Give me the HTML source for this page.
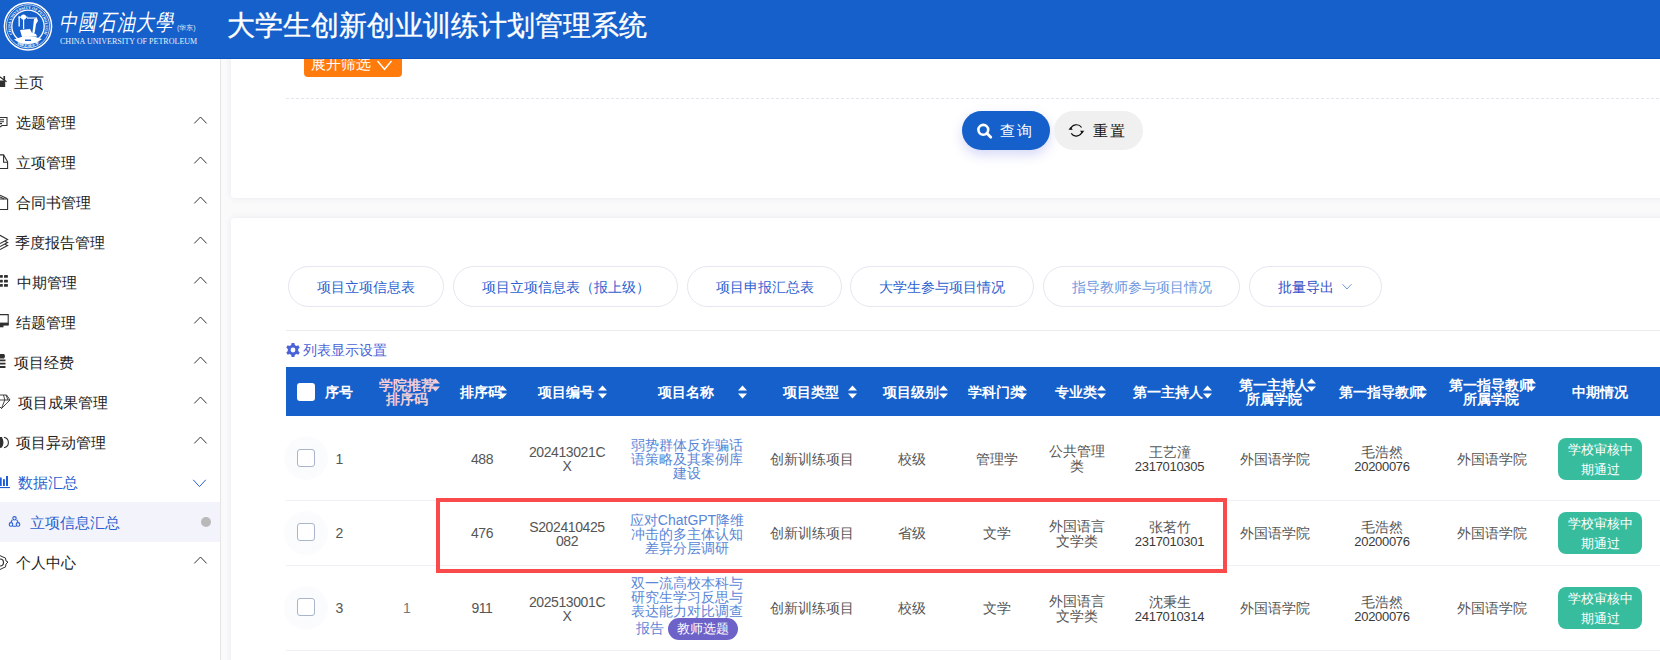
<!DOCTYPE html>
<html><head><meta charset="utf-8">
<style>
*{box-sizing:border-box;margin:0;padding:0}
html,body{width:1660px;height:660px;overflow:hidden}
body{position:relative;background:#fafafb;font-family:"Liberation Sans",sans-serif;font-size:14px;color:#333}
.a{position:absolute;white-space:nowrap}
#hdr{position:absolute;left:0;top:0;width:1660px;height:59px;background:#1560cb;border-bottom:1px solid #0b55c2;z-index:10}
#side{position:absolute;left:0;top:59px;width:221px;height:601px;background:#fff;border-right:1px solid #e6e6e6;z-index:5}
.mi{position:absolute;left:0;width:220px;height:40px;line-height:40px;font-size:15px;color:#333}
.mi .t{position:absolute;top:0}
.st{position:absolute;font-size:15px;line-height:20px;white-space:nowrap}
.chev{position:absolute;left:194px;width:12px;height:12px}
.card{position:absolute;left:231px;width:1500px;background:#fff;border-radius:4px;box-shadow:0 0 7px rgba(30,30,90,.07)}
</style></head><body>
<div id="hdr">
  <svg class="a" style="left:0;top:0" width="60" height="59" viewBox="0 0 60 59">
 <defs><path id="rp" d="M 12.93 35.00 A 17.4 17.4 0 1 1 43.07 35.00"/><path id="rq" d="M 17.08 43.77 A 20.6 20.6 0 0 0 38.92 43.77"/></defs>
 <text font-family="Liberation Serif" font-weight="bold" font-size="3.9" fill="#fff" text-anchor="middle"><textPath href="#rp" startOffset="50%">CHINA UNIVERSITY OF PETROLEUM</textPath></text>
 <text font-size="3.6" fill="#fff" text-anchor="middle" font-weight="bold"><textPath href="#rq" startOffset="50%">中国石油大学</textPath></text>
 <g fill="none" stroke="#fff">
  <circle cx="28" cy="26.3" r="23.6" stroke-width="1.5"/>
  <circle cx="28" cy="26.3" r="21.6" stroke-width="0.7"/>
  <circle cx="28" cy="26.3" r="16.2" stroke-width="1.3"/>
  
 </g>
 <g fill="#fff">
  <rect x="18.5" y="16.5" width="1.3" height="10"/>
  <rect x="18.5" y="16.5" width="9" height="1.2"/>
  <circle cx="23.5" cy="17" r="2.6"/>
  <rect x="23" y="17" width="1.2" height="12"/>
  <rect x="27" y="17.5" width="10" height="1.1"/>
  <path d="M34 19 L37 18 L38 21 L36 24 L35 31 L33.5 36 L32 36 L33 28 Z"/>
  <path d="M20 30 L30 29 L32 33 L36 34 L37 36.5 L22 37 Z"/>
  <path d="M14 39.5 Q28 33.5 42 39 Q36 44 28 44 Q20 44 14 39.5 Z"/>
 </g>
 <rect x="25" y="39.5" width="6" height="1.5" fill="#1560cb"/>
</svg>
<div class="a" style="left:59px;top:4px;font-family:'Liberation Serif',serif;font-style:italic;font-weight:normal;font-size:18px;line-height:30px;color:#fff;letter-spacing:1.3px;transform:scaleY(1.25);transform-origin:0 0">中國石油大學</div>
<div class="a" style="left:177px;top:22px;font-size:7px;line-height:12px;color:#dfe8f8">(华东)</div>
<div class="a" id="cup" style="left:60px;top:37px;font-family:'Liberation Serif',serif;font-size:8.4px;line-height:10px;color:#e6eefa;transform:scaleX(0.958);transform-origin:0 0">CHINA UNIVERSITY OF PETROLEUM</div>
  <div class="a" id="title" style="left:227px;top:6px;font-size:28px;line-height:40px;color:#fff;-webkit-text-stroke:0.35px #fff">大学生创新创业训练计划管理系统</div>
</div>
<div id="side">
<svg class="a" style="left:0;top:0;z-index:6" width="24" height="601" viewBox="0 59 24 601">
<g fill="#303030" stroke="none">
 <path d="M0 80.5 L5.2 80.5 L5.2 87 L0 87 Z"/>
 <rect x="3.4" y="76" width="1.7" height="4.5"/>
</g>
<g fill="none" stroke="#303030" stroke-width="1.1">
 <path d="M-2 75.5 L6.6 81.8"/>
 <path d="M-1 117.5 H7 V125.5 H2 L0 127"/>
 <path d="M0 119.8 H4 M0 121.8 H4 M0 123.6 H2"/>
 <path d="M0 154.9 H3.6 L7.6 161.8 V168.5 H0"/>
 <path d="M3.6 155 V162.3 H7.6"/>
 <path d="M0 199 H7.6 V209.5 H0"/>
 <path d="M0 195.2 L7 198.6 M0 197 L4 199"/>
 <path d="M0 235.3 L7.6 239.5 L0 243.6 M4.8 241.3 L7.6 242.6 L0 246.6 M4.8 244.3 L7.6 245.6 L0 249.6"/>
 <path d="M-1 314.6 H8.2 V325 H-1"/>
 <path d="M0 437.5 A 5 5.5 0 0 1 0 447.5 M4 437.2 A 6 5.5 0 0 1 4 447.8"/>
 <path d="M-2 395 H6.6 L10 400 L1.5 408.5 L-7 400 M-1 400 H10 M3.5 395 L4.8 400 L1.5 408.5 M6 395 L8 400" stroke-width="0.9"/>
 <path d="M0 555.6 L3 557 L5.5 558 L6 561 L8 562 L6 564 L5.5 567 L3 568 L0 569.5" stroke-width="1"/>
 <path d="M0 559 A 3.5 3.5 0 0 1 0 566" stroke-width="1.2"/>
</g>
<g fill="#303030">
 <rect x="0" y="322.6" width="8.4" height="2.6"/>
 <rect x="-1" y="325" width="4.5" height="2.3"/>
 <rect x="0" y="275" width="2.8" height="2.8" rx="0.6"/><rect x="4" y="275" width="3.9" height="2.8" rx="0.6"/>
 <rect x="0" y="279.8" width="2.8" height="2.8" rx="0.6"/><rect x="4" y="279.8" width="3.9" height="2.8" rx="0.6"/>
 <rect x="0" y="284" width="2.8" height="2.8" rx="0.6"/><rect x="4" y="284" width="3.9" height="2.8" rx="0.6"/>
 <path d="M0 354 H4 Q6 356 4 358.5 H0 Z"/>
 <path d="M0 359.6 H5.5 V361.2 H0 Z M0 362.8 H5.5 V364.5 H0 Z M0 366 H5.5 V368 H0 Z"/>
 <path d="M0 437 H2 Q4 442 2 447.5 H0 Z"/>
</g>
<g fill="#1d5ad6">
 <rect x="-0.5" y="477.5" width="2.2" height="8.5"/>
 <rect x="3" y="479.2" width="1.9" height="6.8"/>
 <rect x="6" y="476" width="2" height="10"/>
 <rect x="-1" y="487" width="11" height="1.1"/>
</g>
<g fill="none" stroke="#2a5fd6" stroke-width="1.1">
 <path d="M12.3 519.8 Q11.2 521.2 11 522.4 M16.7 519.8 Q17.8 521.2 18 522.4 M12.6 526.2 H16.4"/>
 <circle cx="14.5" cy="518.3" r="1.7" fill="#f3f4fb"/>
 <circle cx="11" cy="524.4" r="1.8" fill="#f3f4fb"/>
 <circle cx="18" cy="524.4" r="1.8" fill="#f3f4fb"/>
</g>
</svg>
<div class="a" style="left:0;top:443px;width:220px;height:40px;background:#f3f4fb"></div>
<div class="a" style="left:201px;top:458px;width:10px;height:10px;border-radius:50%;background:#b9b9b9"></div>
<div class="st" style="left:14.3px;top:14px;color:#222">主页</div>
<div class="st" style="left:15.7px;top:54px;color:#222">选题管理</div>
<svg class="a" style="left:190px;top:53px" width="20" height="20"><polyline points="4.3,11.4 10.5,5 16.6,11.4" fill="none" stroke="#333" stroke-width="1"/></svg>
<div class="st" style="left:15.9px;top:94px;color:#222">立项管理</div>
<svg class="a" style="left:190px;top:93px" width="20" height="20"><polyline points="4.3,11.4 10.5,5 16.6,11.4" fill="none" stroke="#333" stroke-width="1"/></svg>
<div class="st" style="left:16.0px;top:134px;color:#222">合同书管理</div>
<svg class="a" style="left:190px;top:133px" width="20" height="20"><polyline points="4.3,11.4 10.5,5 16.6,11.4" fill="none" stroke="#333" stroke-width="1"/></svg>
<div class="st" style="left:15.3px;top:174px;color:#222">季度报告管理</div>
<svg class="a" style="left:190px;top:173px" width="20" height="20"><polyline points="4.3,11.4 10.5,5 16.6,11.4" fill="none" stroke="#333" stroke-width="1"/></svg>
<div class="st" style="left:16.6px;top:214px;color:#222">中期管理</div>
<svg class="a" style="left:190px;top:213px" width="20" height="20"><polyline points="4.3,11.4 10.5,5 16.6,11.4" fill="none" stroke="#333" stroke-width="1"/></svg>
<div class="st" style="left:16.3px;top:254px;color:#222">结题管理</div>
<svg class="a" style="left:190px;top:253px" width="20" height="20"><polyline points="4.3,11.4 10.5,5 16.6,11.4" fill="none" stroke="#333" stroke-width="1"/></svg>
<div class="st" style="left:13.8px;top:294px;color:#222">项目经费</div>
<svg class="a" style="left:190px;top:293px" width="20" height="20"><polyline points="4.3,11.4 10.5,5 16.6,11.4" fill="none" stroke="#333" stroke-width="1"/></svg>
<div class="st" style="left:18.2px;top:334px;color:#222">项目成果管理</div>
<svg class="a" style="left:190px;top:333px" width="20" height="20"><polyline points="4.3,11.4 10.5,5 16.6,11.4" fill="none" stroke="#333" stroke-width="1"/></svg>
<div class="st" style="left:15.8px;top:374px;color:#222">项目异动管理</div>
<svg class="a" style="left:190px;top:373px" width="20" height="20"><polyline points="4.3,11.4 10.5,5 16.6,11.4" fill="none" stroke="#333" stroke-width="1"/></svg>
<div class="st" style="left:17.5px;top:414px;color:#2b5fd0">数据汇总</div>
<svg class="a" style="left:190px;top:413px" width="20" height="20"><polyline points="3.2,7.8 9.5,14.6 15.8,7.8" fill="none" stroke="#2b5fd0" stroke-width="1"/></svg>
<div class="st" style="left:29.8px;top:454px;color:#2b5fd0">立项信息汇总</div>
<div class="st" style="left:15.7px;top:494px;color:#222">个人中心</div>
<svg class="a" style="left:190px;top:493px" width="20" height="20"><polyline points="4.3,11.4 10.5,5 16.6,11.4" fill="none" stroke="#333" stroke-width="1"/></svg>
</div>
<!--CONTENT-->
<div class="card" style="top:-20px;height:218px"></div>
<div class="card" style="top:218px;height:600px"></div>
<div class="a" style="left:304px;top:40px;width:98px;height:37px;background:#ff7b0d;border-radius:4px;z-index:2"></div>
<div class="a" style="left:311px;top:56.0px;font-size:15px;line-height:16px;color:#fff;z-index:3">展开筛选</div>
<svg class="a" style="left:374px;top:56px;z-index:3" width="20" height="18"><polyline points="3.5,5 10.5,13.3 17.5,5" fill="none" stroke="#fff" stroke-width="1.4"/></svg>
<div class="a" style="left:286px;top:98px;width:1400px;height:1px;background:repeating-linear-gradient(90deg,#e3e6ed 0 3px,transparent 3px 5px)"></div>
<div class="a" style="left:962px;top:111px;width:88px;height:39px;border-radius:20px;background:#1560cb;box-shadow:0 5px 12px rgba(70,80,220,.22)"></div>
<svg class="a" style="left:975px;top:121px" width="20" height="20"><circle cx="8.3" cy="8.8" r="4.9" fill="none" stroke="#fff" stroke-width="2.6"/><path d="M11.8 12.3 L15.8 16.3" stroke="#fff" stroke-width="2.8" stroke-linecap="round"/></svg>
<div class="a" style="left:999.5px;top:122.5px;font-size:15px;line-height:16px;color:#fff;letter-spacing:2px;font-weight:500">查询</div>
<div class="a" style="left:1054px;top:111px;width:89px;height:39px;border-radius:20px;background:#f0f0f0"></div>
<svg class="a" style="left:1066px;top:120px" width="20" height="20"><path d="M4.6 9.4 A6.1 6.1 0 0 1 15.6 7.5" fill="none" stroke="#111" stroke-width="1.2"/><path d="M16.2 11.2 A6.1 6.1 0 0 1 5.2 13.4" fill="none" stroke="#111" stroke-width="1.2"/><path d="M2.5 9.8 L6.8 9.8 L4.6 7 Z" fill="#111"/><path d="M18.3 10.8 L14 10.8 L16.2 13.6 Z" fill="#111"/></svg>
<div class="a" style="left:1092.5px;top:122.5px;font-size:15px;line-height:16px;color:#111;letter-spacing:2px">重置</div>
<div class="a" style="left:288px;top:266px;width:156px;height:41px;border:1px solid #e5e6f0;border-radius:21px"></div>
<div class="a" style="left:288px;top:277px;width:156px;text-align:center;font-size:14px;line-height:20px;color:#2d5fd0">项目立项信息表</div>
<div class="a" style="left:453px;top:266px;width:225px;height:41px;border:1px solid #e5e6f0;border-radius:21px"></div>
<div class="a" style="left:453px;top:277px;width:225px;text-align:center;font-size:14px;line-height:20px;color:#2d5fd0">项目立项信息表（报上级）</div>
<div class="a" style="left:687px;top:266px;width:155px;height:41px;border:1px solid #e5e6f0;border-radius:21px"></div>
<div class="a" style="left:687px;top:277px;width:155px;text-align:center;font-size:14px;line-height:20px;color:#2d5fd0">项目申报汇总表</div>
<div class="a" style="left:850px;top:266px;width:184px;height:41px;border:1px solid #e5e6f0;border-radius:21px"></div>
<div class="a" style="left:850px;top:277px;width:184px;text-align:center;font-size:14px;line-height:20px;color:#2d5fd0">大学生参与项目情况</div>
<div class="a" style="left:1043px;top:266px;width:197px;height:41px;border:1px solid #e5e6f0;border-radius:21px"></div>
<div class="a" style="left:1043px;top:277px;width:197px;text-align:center;font-size:14px;line-height:20px;color:#6e98e0">指导教师参与项目情况</div>
<div class="a" style="left:1249px;top:266px;width:133px;height:41px;border:1px solid #e5e6f0;border-radius:21px"></div>
<div class="a" style="left:1277.5px;top:279.5px;font-size:14px;line-height:15px;color:#3350c6;">批量导出</div>
<svg class="a" style="left:1340px;top:280px" width="14" height="12"><polyline points="2.5,4.2 7,9 11.5,4.2" fill="none" stroke="#6e98e0" stroke-width="1"/></svg>
<div class="a" style="left:286px;top:330px;width:1400px;height:1px;background:#ebebee"></div>
<svg class="a" style="left:285px;top:342px" width="16" height="16" viewBox="0 0 16 16"><path fill="#4b63d8" d="M6.6 1 H9.4 L9.8 3 L11.4 3.9 L13.3 3.2 L14.7 5.6 L13.2 7 V9 L14.7 10.4 L13.3 12.8 L11.4 12.1 L9.8 13 L9.4 15 H6.6 L6.2 13 L4.6 12.1 L2.7 12.8 L1.3 10.4 L2.8 9 V7 L1.3 5.6 L2.7 3.2 L4.6 3.9 L6.2 3 Z M8 5.6 A2.4 2.4 0 1 0 8 10.4 A2.4 2.4 0 1 0 8 5.6 Z"/></svg>
<div class="a" style="left:302.5px;top:342.5px;font-size:14px;line-height:15px;color:#4b63d8;">列表显示设置</div>
<div class="a" style="left:286px;top:367px;width:1400px;height:49px;background:#1560cb"></div>
<div class="a" style="left:297px;top:383px;width:18px;height:18px;background:#fff;border-radius:3px"></div>
<div class="a" style="left:324.5px;top:384.5px;font-size:14px;line-height:15px;color:#fff;font-weight:bold">序号</div>
<div class="a" style="left:367.0px;top:378.0px;width:80px;text-align:center;font-size:14px;line-height:14px;color:#f2cdd6;font-weight:bold">学院推荐<br>排序码</div>
<svg class="a" style="left:430px;top:377px" width="11" height="16" viewBox="0 0 11 16"><path d="M5.5 1.5 L10 6.5 H1 Z M5.5 14.5 L10 9.5 H1 Z" fill="#f2cdd6"/></svg>
<div class="a" style="left:459.5px;top:384.5px;font-size:14px;line-height:15px;color:#fff;font-weight:bold">排序码</div>
<svg class="a" style="left:497px;top:384px" width="11" height="16" viewBox="0 0 11 16"><path d="M5.5 1.5 L10 6.5 H1 Z M5.5 14.5 L10 9.5 H1 Z" fill="#fff"/></svg>
<div class="a" style="left:537.5px;top:384.5px;font-size:14px;line-height:15px;color:#fff;font-weight:bold">项目编号</div>
<svg class="a" style="left:596.5px;top:384px" width="11" height="16" viewBox="0 0 11 16"><path d="M5.5 1.5 L10 6.5 H1 Z M5.5 14.5 L10 9.5 H1 Z" fill="#fff"/></svg>
<div class="a" style="left:657.5px;top:384.5px;font-size:14px;line-height:15px;color:#fff;font-weight:bold">项目名称</div>
<svg class="a" style="left:736.5px;top:384px" width="11" height="16" viewBox="0 0 11 16"><path d="M5.5 1.5 L10 6.5 H1 Z M5.5 14.5 L10 9.5 H1 Z" fill="#fff"/></svg>
<div class="a" style="left:782.5px;top:384.5px;font-size:14px;line-height:15px;color:#fff;font-weight:bold">项目类型</div>
<svg class="a" style="left:846.5px;top:384px" width="11" height="16" viewBox="0 0 11 16"><path d="M5.5 1.5 L10 6.5 H1 Z M5.5 14.5 L10 9.5 H1 Z" fill="#fff"/></svg>
<div class="a" style="left:882.5px;top:384.5px;font-size:14px;line-height:15px;color:#fff;font-weight:bold">项目级别</div>
<svg class="a" style="left:937.5px;top:384px" width="11" height="16" viewBox="0 0 11 16"><path d="M5.5 1.5 L10 6.5 H1 Z M5.5 14.5 L10 9.5 H1 Z" fill="#fff"/></svg>
<div class="a" style="left:967.5px;top:384.5px;font-size:14px;line-height:15px;color:#fff;font-weight:bold">学科门类</div>
<svg class="a" style="left:1016.5px;top:384px" width="11" height="16" viewBox="0 0 11 16"><path d="M5.5 1.5 L10 6.5 H1 Z M5.5 14.5 L10 9.5 H1 Z" fill="#fff"/></svg>
<div class="a" style="left:1055px;top:384.5px;font-size:14px;line-height:15px;color:#fff;font-weight:bold">专业类</div>
<svg class="a" style="left:1096px;top:384px" width="11" height="16" viewBox="0 0 11 16"><path d="M5.5 1.5 L10 6.5 H1 Z M5.5 14.5 L10 9.5 H1 Z" fill="#fff"/></svg>
<div class="a" style="left:1133px;top:384.5px;font-size:14px;line-height:15px;color:#fff;font-weight:bold">第一主持人</div>
<svg class="a" style="left:1202px;top:384px" width="11" height="16" viewBox="0 0 11 16"><path d="M5.5 1.5 L10 6.5 H1 Z M5.5 14.5 L10 9.5 H1 Z" fill="#fff"/></svg>
<div class="a" style="left:1338.5px;top:384.5px;font-size:14px;line-height:15px;color:#fff;font-weight:bold">第一指导教师</div>
<svg class="a" style="left:1416.5px;top:384px" width="11" height="16" viewBox="0 0 11 16"><path d="M5.5 1.5 L10 6.5 H1 Z M5.5 14.5 L10 9.5 H1 Z" fill="#fff"/></svg>
<div class="a" style="left:1223.5px;top:378.0px;width:100px;text-align:center;font-size:14px;line-height:14px;color:#fff;font-weight:bold">第一主持人<br>所属学院</div>
<svg class="a" style="left:1306px;top:377px" width="11" height="16" viewBox="0 0 11 16"><path d="M5.5 1.5 L10 6.5 H1 Z M5.5 14.5 L10 9.5 H1 Z" fill="#fff"/></svg>
<div class="a" style="left:1441.0px;top:378.0px;width:100px;text-align:center;font-size:14px;line-height:14px;color:#fff;font-weight:bold">第一指导教师<br>所属学院</div>
<svg class="a" style="left:1526px;top:377px" width="11" height="16" viewBox="0 0 11 16"><path d="M5.5 1.5 L10 6.5 H1 Z M5.5 14.5 L10 9.5 H1 Z" fill="#fff"/></svg>
<div class="a" style="left:1550.0px;top:384.5px;width:100px;text-align:center;font-size:14px;line-height:15px;color:#fff;font-weight:bold">中期情况</div>
<div class="a" style="left:284px;top:436px;width:44px;height:44px;border-radius:50%;background:radial-gradient(circle,#fdfdfe 0,#fafbfd 50%,#fcfcfe 75%,rgba(255,255,255,0) 100%)"></div>
<div class="a" style="left:297px;top:449px;width:18px;height:18px;background:#fff;border:1.3px solid #aab5cb;border-radius:3px"></div>
<div class="a" style="left:335.5px;top:451.5px;font-size:14px;line-height:15px;color:#555;">1</div>
<div class="a" style="left:382.0px;top:451.5px;width:200px;text-align:center;font-size:14px;line-height:15px;color:#555;letter-spacing:-0.5px">488</div>
<div class="a" style="left:467.0px;top:445.0px;width:200px;text-align:center;font-size:14px;line-height:14px;color:#555;letter-spacing:-0.4px">202413021C<br>X</div>
<div class="a" style="left:587.0px;top:438.0px;width:200px;text-align:center;font-size:14px;line-height:14px;color:#5a86d6;">弱势群体反诈骗话<br>语策略及其案例库<br>建设</div>
<div class="a" style="left:711.5px;top:451.5px;width:200px;text-align:center;font-size:14px;line-height:15px;color:#555;">创新训练项目</div>
<div class="a" style="left:811.5px;top:451.5px;width:200px;text-align:center;font-size:14px;line-height:15px;color:#555;">校级</div>
<div class="a" style="left:897.0px;top:451.5px;width:200px;text-align:center;font-size:14px;line-height:15px;color:#555;">管理学</div>
<div class="a" style="left:977.0px;top:444.0px;width:200px;text-align:center;font-size:14px;line-height:15px;color:#555;">公共管理<br>类</div>
<div class="a" style="left:1069.5px;top:445px;width:200px;text-align:center;font-size:14px;line-height:14px;color:#555">王艺潼<br><span style="color:#3a3a3a;font-size:13px;letter-spacing:-0.3px">2317010305</span></div>
<div class="a" style="left:1174.5px;top:451.5px;width:200px;text-align:center;font-size:14px;line-height:15px;color:#555;">外国语学院</div>
<div class="a" style="left:1282px;top:445px;width:200px;text-align:center;font-size:14px;line-height:14px;color:#555">毛浩然<br><span style="color:#3a3a3a;font-size:13px;letter-spacing:-0.3px">20200076</span></div>
<div class="a" style="left:1392.0px;top:451.5px;width:200px;text-align:center;font-size:14px;line-height:15px;color:#555;">外国语学院</div>
<div class="a" style="left:1558px;top:438px;width:84px;height:42px;border-radius:8px;background:#37bd9e;color:#fff;font-size:13px;line-height:20px;text-align:center;padding-top:2px">学校审核中<br>期通过</div>
<div class="a" style="left:286px;top:500px;width:1400px;height:1px;background:#eef0f5"></div>
<div class="a" style="left:284px;top:510.5px;width:44px;height:44px;border-radius:50%;background:radial-gradient(circle,#fdfdfe 0,#fafbfd 50%,#fcfcfe 75%,rgba(255,255,255,0) 100%)"></div>
<div class="a" style="left:297px;top:523px;width:18px;height:18px;background:#fff;border:1.3px solid #aab5cb;border-radius:3px"></div>
<div class="a" style="left:335.5px;top:526.0px;font-size:14px;line-height:15px;color:#555;">2</div>
<div class="a" style="left:382.0px;top:526.0px;width:200px;text-align:center;font-size:14px;line-height:15px;color:#555;letter-spacing:-0.5px">476</div>
<div class="a" style="left:467.0px;top:519.5px;width:200px;text-align:center;font-size:14px;line-height:14px;color:#555;letter-spacing:-0.4px">S202410425<br>082</div>
<div class="a" style="left:587.0px;top:512.5px;width:200px;text-align:center;font-size:14px;line-height:14px;color:#5a86d6;">应对ChatGPT降维<br>冲击的多主体认知<br>差异分层调研</div>
<div class="a" style="left:711.5px;top:526.0px;width:200px;text-align:center;font-size:14px;line-height:15px;color:#555;">创新训练项目</div>
<div class="a" style="left:811.5px;top:526.0px;width:200px;text-align:center;font-size:14px;line-height:15px;color:#555;">省级</div>
<div class="a" style="left:897.0px;top:526.0px;width:200px;text-align:center;font-size:14px;line-height:15px;color:#555;">文学</div>
<div class="a" style="left:977.0px;top:518.5px;width:200px;text-align:center;font-size:14px;line-height:15px;color:#555;">外国语言<br>文学类</div>
<div class="a" style="left:1069.5px;top:519.5px;width:200px;text-align:center;font-size:14px;line-height:14px;color:#555">张茗竹<br><span style="color:#3a3a3a;font-size:13px;letter-spacing:-0.3px">2317010301</span></div>
<div class="a" style="left:1174.5px;top:526.0px;width:200px;text-align:center;font-size:14px;line-height:15px;color:#555;">外国语学院</div>
<div class="a" style="left:1282px;top:519.5px;width:200px;text-align:center;font-size:14px;line-height:14px;color:#555">毛浩然<br><span style="color:#3a3a3a;font-size:13px;letter-spacing:-0.3px">20200076</span></div>
<div class="a" style="left:1392.0px;top:526.0px;width:200px;text-align:center;font-size:14px;line-height:15px;color:#555;">外国语学院</div>
<div class="a" style="left:1558px;top:512px;width:84px;height:42px;border-radius:8px;background:#37bd9e;color:#fff;font-size:13px;line-height:20px;text-align:center;padding-top:2px">学校审核中<br>期通过</div>
<div class="a" style="left:286px;top:565px;width:1400px;height:1px;background:#eef0f5"></div>
<div class="a" style="left:284px;top:585.5px;width:44px;height:44px;border-radius:50%;background:radial-gradient(circle,#fdfdfe 0,#fafbfd 50%,#fcfcfe 75%,rgba(255,255,255,0) 100%)"></div>
<div class="a" style="left:297px;top:598px;width:18px;height:18px;background:#fff;border:1.3px solid #aab5cb;border-radius:3px"></div>
<div class="a" style="left:335.5px;top:601.0px;font-size:14px;line-height:15px;color:#555;">3</div>
<div class="a" style="left:307.0px;top:601.0px;width:200px;text-align:center;font-size:14px;line-height:15px;color:#777;">1</div>
<div class="a" style="left:382.0px;top:601.0px;width:200px;text-align:center;font-size:14px;line-height:15px;color:#555;letter-spacing:-0.5px">911</div>
<div class="a" style="left:467.0px;top:594.5px;width:200px;text-align:center;font-size:14px;line-height:14px;color:#555;letter-spacing:-0.4px">202513001C<br>X</div>
<div class="a" style="left:711.5px;top:601.0px;width:200px;text-align:center;font-size:14px;line-height:15px;color:#555;">创新训练项目</div>
<div class="a" style="left:811.5px;top:601.0px;width:200px;text-align:center;font-size:14px;line-height:15px;color:#555;">校级</div>
<div class="a" style="left:897.0px;top:601.0px;width:200px;text-align:center;font-size:14px;line-height:15px;color:#555;">文学</div>
<div class="a" style="left:977.0px;top:593.5px;width:200px;text-align:center;font-size:14px;line-height:15px;color:#555;">外国语言<br>文学类</div>
<div class="a" style="left:1069.5px;top:594.5px;width:200px;text-align:center;font-size:14px;line-height:14px;color:#555">沈秉生<br><span style="color:#3a3a3a;font-size:13px;letter-spacing:-0.3px">2417010314</span></div>
<div class="a" style="left:1174.5px;top:601.0px;width:200px;text-align:center;font-size:14px;line-height:15px;color:#555;">外国语学院</div>
<div class="a" style="left:1282px;top:594.5px;width:200px;text-align:center;font-size:14px;line-height:14px;color:#555">毛浩然<br><span style="color:#3a3a3a;font-size:13px;letter-spacing:-0.3px">20200076</span></div>
<div class="a" style="left:1392.0px;top:601.0px;width:200px;text-align:center;font-size:14px;line-height:15px;color:#555;">外国语学院</div>
<div class="a" style="left:1558px;top:587px;width:84px;height:42px;border-radius:8px;background:#37bd9e;color:#fff;font-size:13px;line-height:20px;text-align:center;padding-top:2px">学校审核中<br>期通过</div>
<div class="a" style="left:286px;top:650px;width:1400px;height:1px;background:#eef0f5"></div>
<div class="a" style="left:587px;top:576px;width:200px;text-align:center;font-size:14px;line-height:14px;color:#5a86d6">双一流高校本科与<br>研究生学习反思与<br>表达能力对比调查</div>
<div class="a" style="left:636px;top:621px;font-size:14px;line-height:14px;color:#5a86d6">报告</div>
<div class="a" style="left:668px;top:618px;width:70px;height:22px;border-radius:11px;background:#6d62c8;color:#fff;font-size:13px;line-height:22px;text-align:center">教师选题</div>
<div class="a" style="left:436px;top:498px;width:791px;height:75px;border:4px solid #f94b4b"></div>

<!--/CONTENT-->
</body></html>
